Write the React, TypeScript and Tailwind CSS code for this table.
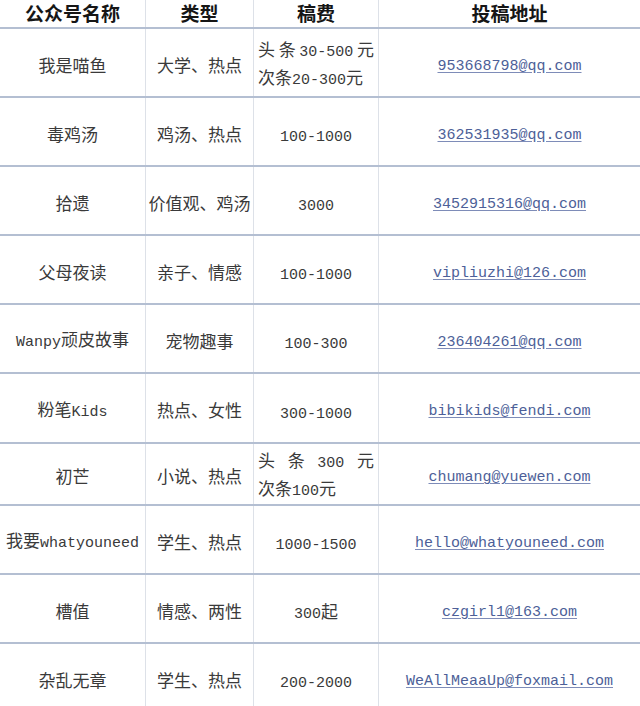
import React from 'react'

type Row = {
  name: string
  kind: string
  fee: string | [string[], string]
  mail: string
}

const rows: Row[] = [
  { name: '我是喵鱼', kind: '大学、热点', fee: [['头', '条', '30-500', '元'], '次条20-300元'], mail: '953668798@qq.com' },
  { name: '毒鸡汤', kind: '鸡汤、热点', fee: '100-1000', mail: '362531935@qq.com' },
  { name: '拾遗', kind: '价值观、鸡汤', fee: '3000', mail: '3452915316@qq.com' },
  { name: '父母夜读', kind: '亲子、情感', fee: '100-1000', mail: 'vipliuzhi@126.com' },
  { name: 'Wanpy顽皮故事', kind: '宠物趣事', fee: '100-300', mail: '236404261@qq.com' },
  { name: '粉笔Kids', kind: '热点、女性', fee: '300-1000', mail: 'bibikids@fendi.com' },
  { name: '初芒', kind: '小说、热点', fee: [['头', '条', '300', '元'], '次条100元'], mail: 'chumang@yuewen.com' },
  { name: '我要whatyouneed', kind: '学生、热点', fee: '1000-1500', mail: 'hello@whatyouneed.com' },
  { name: '槽值', kind: '情感、两性', fee: '300起', mail: 'czgirl1@163.com' },
  { name: '杂乱无章', kind: '学生、热点', fee: '200-2000', mail: 'WeAllMeaaUp@foxmail.com' },
]

// ascii runs get the narrow mono face, like the half-width glyphs of the sheet
const Mixed = ({ text }: { text: string }) => (
  <>
    {text.split(/([\x20-\x7e]+)/).filter(Boolean).map((part, i) =>
      /^[\x20-\x7e]+$/.test(part) ? (
        <span key={i} className="font-['Liberation_Mono',monospace] text-[15px]">{part}</span>
      ) : (
        <span key={i}>{part}</span>
      )
    )}
  </>
)

const heights = ['h-[69px]', 'h-[69px]', 'h-[69px]', 'h-[69px]', 'h-[69px]', 'h-[70px]', 'h-[62px]', 'h-[69px]', 'h-[69px]', 'h-[69px]']

const App = () => {
  return (
    <div className="w-[640px] h-[706px] overflow-hidden bg-white font-['Noto_Sans_CJK_SC',sans-serif] text-[#3a3a3a]">
      <div className="grid grid-cols-[146px_108px_125px_261px] h-[29px] border-b-2 border-[#b4bfd2] text-[19px] font-bold text-[#161616] leading-none">
        <div className="flex items-center justify-center border-r border-[#dde1e8] pb-[3px]">公众号名称</div>
        <div className="flex items-center justify-center border-r border-[#dde1e8] pb-[3px]">类型</div>
        <div className="flex items-center justify-center border-r border-[#dde1e8] pb-[3px]">稿费</div>
        <div className="flex items-center justify-center pb-[3px]">投稿地址</div>
      </div>

      {rows.map((row, idx) => (
        <div
          key={row.name}
          className={`grid grid-cols-[146px_108px_125px_261px] border-b-2 border-[#b4bfd2] text-[17px] ${heights[idx]}`}
        >
          <div className="flex items-center justify-center border-r border-[#dde1e8] whitespace-nowrap pt-[4px]">
            <span><Mixed text={row.name} /></span>
          </div>
          <div className="flex items-center justify-center border-r border-[#dde1e8] whitespace-nowrap pt-[4px]">
            {row.kind}
          </div>
          <div className="flex items-center justify-center border-r border-[#dde1e8] whitespace-nowrap pt-[4px]">
            {typeof row.fee === 'string' ? (
              <span className="pt-[4px]"><Mixed text={row.fee} /></span>
            ) : (
              <div className="w-full px-[4px] leading-[24px]">
                <div className="flex justify-between items-baseline">
                  {row.fee[0].map((w, i) => (
                    <span key={i}><Mixed text={w} /></span>
                  ))}
                </div>
                <div>
                  <Mixed text={row.fee[1]} />
                </div>
              </div>
            )}
          </div>
          <div className="flex items-center justify-center pt-[9px]">
            <span className="font-['Liberation_Mono',monospace] text-[15px] text-[#4d5f98] underline underline-offset-2 decoration-[#7e8cb8]">
              {row.mail}
            </span>
          </div>
        </div>
      ))}
    </div>
  )
}

export default App
